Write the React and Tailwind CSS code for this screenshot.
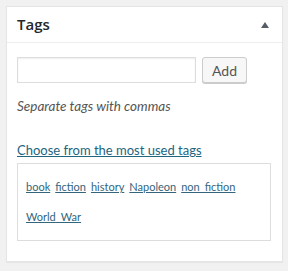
import React from "react";

const tags = ["book", "fiction", "history", "Napoleon", "non_fiction", "World_War"];

const App = () => {
  return (
    <div className="min-h-[271px] w-[288px] bg-[#f1f1f1] pt-[6px] pl-[6px] pr-[5px] pb-[7px] font-['Lato',sans-serif]">
      <div className="bg-white border border-[#e5e5e5] shadow-[0_1px_1px_rgba(0,0,0,0.04)]">
        <div className="flex items-center justify-between h-[36px] pl-[10px] pr-[13px] border-b border-[#eee]">
          <h2 className="text-[15px] font-semibold text-[#23282d] leading-none font-['Open_Sans',sans-serif]">Tags</h2>
          <svg width="8" height="6" viewBox="0 0 8 6">
            <path d="M4 0 L8 6 L0 6 Z" fill="#555d66" />
          </svg>
        </div>
        <div className="pl-[10px] pr-[11px] pt-[14px] pb-[20px]">
          <div className="flex items-center gap-[6px]">
            <input
              type="text"
              className="w-[179px] h-[26px] border border-[#ddd] bg-white shadow-[inset_0_1px_2px_rgba(0,0,0,0.07)] outline-none"
            />
            <button className="h-[26px] w-[45px] text-[14px] text-[#555] bg-[#f7f7f7] border border-[#ccc] rounded-[3px] shadow-[0_1px_0_#ccc]">
              Add
            </button>
          </div>
          <p className="mt-[15px] text-[13.5px] italic text-[#555] leading-[16px]">Separate tags with commas</p>
          <a href="#" className="block mt-[28px] text-[13px] text-[#22657f] underline leading-[16px]">
            Choose from the most used tags
          </a>
          <div className="mt-[5px] border border-[#ddd] h-[78px] pl-[8px] pr-[8px] pt-[14px]">
            <div className="flex flex-wrap gap-x-[5px] gap-y-[13px] text-[11px] leading-[17px]">
              {tags.map((t) => (
                <a key={t} href="#" className="text-[#33657c] underline">
                  {t}
                </a>
              ))}
            </div>
          </div>
        </div>
      </div>
    </div>
  );
};

export default App;
